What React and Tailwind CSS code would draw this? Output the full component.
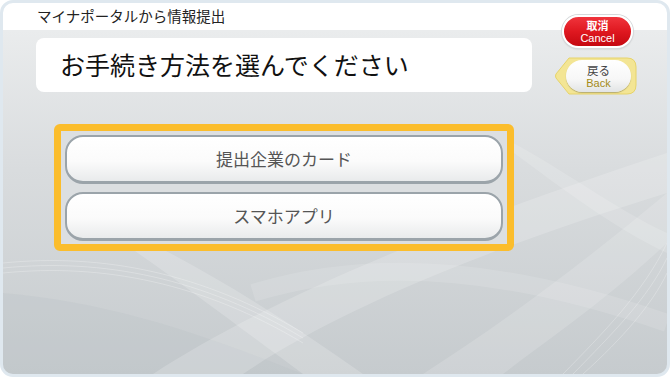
import React from 'react'

const jp = { fontFamily: '"Noto Sans CJK JP", "Noto Sans", sans-serif' }
const latin = { fontFamily: '"Liberation Sans", Arial, sans-serif' }

function Waves() {
  return (
    <svg className="absolute inset-0 pointer-events-none" width="664" height="371" viewBox="0 0 664 371" fill="none">
      <path d="M0 290 C 120 300, 220 340, 300 371 L 0 371 Z" fill="#b9bfc3" opacity="0.25" />
      <path d="M150 371 C 260 300, 420 230, 664 150 L 664 190 C 470 250, 330 310, 240 371 Z" fill="#ffffff" opacity="0.18" />
      <path d="M60 200 C 140 250, 230 320, 300 371 L 360 371 C 260 300, 160 240, 60 200 Z" fill="#ffffff" opacity="0.18" />
      <path d="M420 371 C 500 320, 580 260, 664 190 L 664 240 C 600 300, 540 340, 500 371 Z" fill="#ffffff" opacity="0.15" />
      <path d="M250 290 C 380 250, 520 270, 664 320" stroke="#ffffff" strokeWidth="18" opacity="0.12" />
      <path d="M0 260 C 100 250, 200 270, 300 330" stroke="#ffffff" strokeWidth="1" opacity="0.25" />
      <path d="M0 265 C 100 255, 200 275, 300 335" stroke="#ffffff" strokeWidth="1" opacity="0.25" />
      <path d="M0 270 C 100 260, 200 280, 300 340" stroke="#ffffff" strokeWidth="1" opacity="0.25" />
      <path d="M560 371 C 600 330, 640 290, 664 240" stroke="#ffffff" strokeWidth="1" opacity="0.25" />
      <path d="M570 371 C 610 330, 645 295, 664 255" stroke="#ffffff" strokeWidth="1" opacity="0.25" />
      <path d="M580 371 C 620 335, 650 300, 664 270" stroke="#ffffff" strokeWidth="1" opacity="0.25" />
      <path d="M470 120 C 540 150, 600 200, 664 230 L 664 250 C 600 220, 540 170, 470 120 Z" fill="#ffffff" opacity="0.15" />
    </svg>
  )
}

function OptionButton({ label }) {
  return (
    <button
      className="w-full h-[49px] rounded-[18px] border-2 border-[#9ba4aa] border-b-[3px] bg-[linear-gradient(to_bottom,#ffffff_0%,#fbfbfb_55%,#e9ebec_100%)] shadow-[inset_0_2px_0_#ffffff] flex items-center justify-center text-[17px] text-[#555555]"
      style={jp}
    >
      {label}
    </button>
  )
}

export default function App() {
  return (
    <div className="w-[670px] h-[377px] bg-white">
      <div className="relative w-full h-full rounded-[13px] border-[3px] border-[#dfe8ef] overflow-hidden bg-[linear-gradient(to_bottom,#ffffff_0px,#ffffff_27px,#eaeced_27px,#d9dcde_45%,#c6cbce_100%)]">
        <Waves />
        <div className="relative flex h-full">
          {/* left column */}
          <div className="w-[540px] pl-[33px]">
            <div className="h-[27px] flex items-center pl-[1px] text-[14.5px] text-[#222222] leading-none" style={jp}>
              マイナポータルから情報提出
            </div>
            <div className="mt-[8px] w-[496px] h-[54px] bg-white rounded-[8px] flex items-center pl-[24px] text-[25px] text-[#111111]" style={jp}>
              お手続き方法を選んでください
            </div>
            <div className="mt-[32px] ml-[18px] w-[460px] h-[127px] rounded-[6px] border-[7px] border-[#fbbd2c] bg-[#dcdfe1] px-[4px] pt-[4px] flex flex-col gap-[8px]">
              <OptionButton label="提出企業のカード" />
              <OptionButton label="スマホアプリ" />
            </div>
          </div>

          {/* right column */}
          <div className="flex-1 flex flex-col items-start pt-[12px] pl-[19px]">
            <button className="w-[71px] h-[33px] rounded-full border-2 border-white shadow-[0_0_0_1px_#d6d9db,0_1px_2px_rgba(0,0,0,0.2)] bg-[linear-gradient(to_bottom,#f0343c_0%,#df1820_50%,#c50810_100%)] flex flex-col items-center justify-center text-white">
              <span className="text-[11px] leading-[13px] font-bold" style={jp}>取消</span>
              <span className="text-[11px] leading-[13px]" style={latin}>Cancel</span>
            </button>
            <div className="relative mt-[9px] ml-[-7px] w-[82px] h-[38px]">
              <svg className="absolute inset-0" width="82" height="38" viewBox="0 0 82 38">
                <path d="M14 1 H72 Q81 1 81 10 V28 Q81 37 72 37 H14 L1 21 Q0 19 1 17 Z" fill="#f3e594" stroke="#e6d36a" strokeWidth="1" />
              </svg>
              <div className="absolute left-[11px] top-[3px] w-[65px] h-[32px] rounded-full bg-[linear-gradient(to_bottom,#ffffff_0%,#f7f7f7_60%,#e2e4e5_100%)] shadow-[0_1px_1px_rgba(0,0,0,0.25)] flex flex-col items-center justify-center">
                <span className="text-[11.5px] leading-[14px] text-[#444444]" style={jp}>戻る</span>
                <span className="text-[11px] leading-[13px] text-[#a48b16]" style={latin}>Back</span>
              </div>
            </div>
          </div>
        </div>
      </div>
    </div>
  )
}
